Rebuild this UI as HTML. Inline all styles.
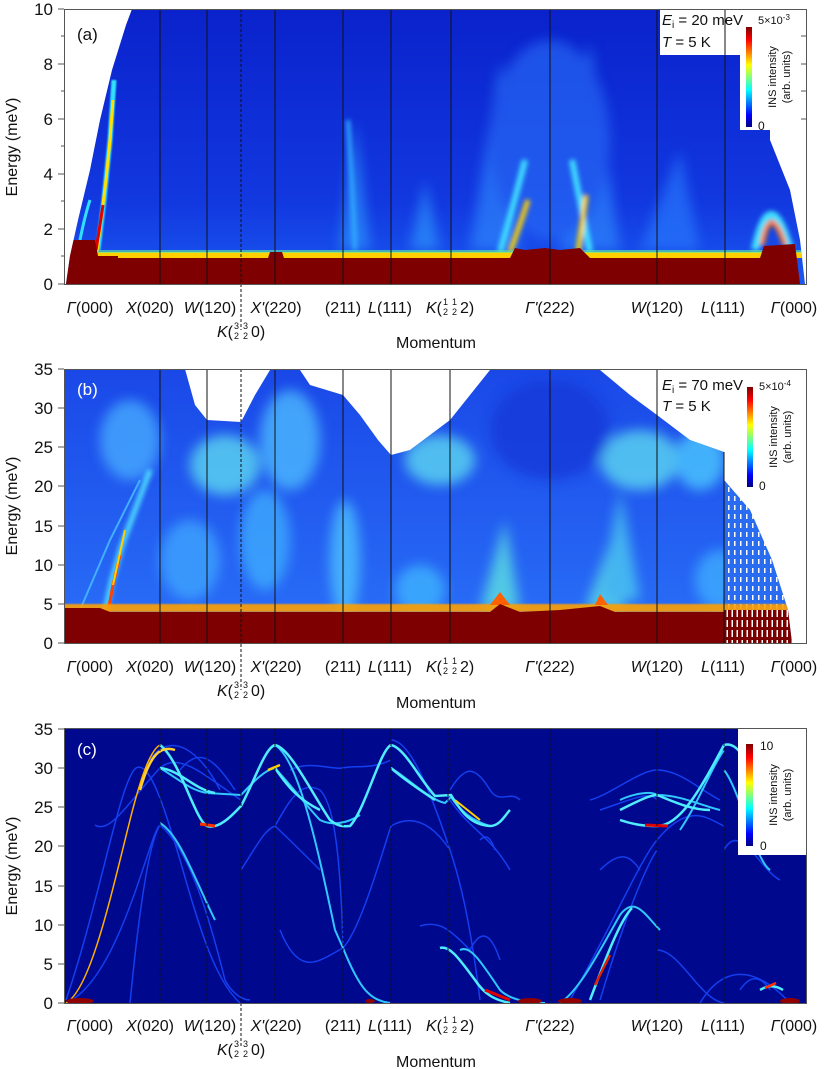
<!DOCTYPE html>
<html><head><meta charset="utf-8"><style>
html,body{margin:0;padding:0;background:#fff;}
svg{display:block;font-family:"Liberation Sans",sans-serif;}
</style></head><body>
<svg width="830" height="1069" viewBox="0 0 830 1069">
<defs>
<linearGradient id="jet" x1="0" y1="1" x2="0" y2="0">
<stop offset="0" stop-color="#00007f"/><stop offset="0.12" stop-color="#0000ff"/><stop offset="0.37" stop-color="#00ffff"/><stop offset="0.62" stop-color="#ffff00"/><stop offset="0.87" stop-color="#ff0000"/><stop offset="1" stop-color="#7f0000"/>
</linearGradient>
<linearGradient id="ga" x1="0" y1="0" x2="0" y2="1">
<stop offset="0" stop-color="#0a22cc"/><stop offset="0.7" stop-color="#1238e0"/><stop offset="1" stop-color="#1a58f0"/>
</linearGradient>
<linearGradient id="gb" x1="0" y1="0" x2="0" y2="1">
<stop offset="0" stop-color="#1a48e8"/><stop offset="1" stop-color="#2a70f8"/>
</linearGradient>
<filter id="bl" x="-50%" y="-50%" width="200%" height="200%"><feGaussianBlur stdDeviation="6"/></filter>
<filter id="bl2" x="-50%" y="-50%" width="200%" height="200%"><feGaussianBlur stdDeviation="2.5"/></filter>
<filter id="bl1" x="-20%" y="-20%" width="140%" height="140%"><feGaussianBlur stdDeviation="0.8"/></filter>
<pattern id="wd" width="5" height="10" patternUnits="userSpaceOnUse"><rect x="0" y="0" width="5" height="10" fill="#7a0000"/><rect x="1.5" y="0" width="1.5" height="7" fill="#fff"/></pattern>
<pattern id="wd2" width="6" height="9" patternUnits="userSpaceOnUse"><rect width="6" height="9" fill="#2a6cf0"/><rect x="2" y="1" width="1.5" height="5" fill="#fff"/></pattern>
<clipPath id="ca"><path d="M66,284 L70,256 L78,220 L90,170 L100,120 L112,70 L126,25 L132,9 L660,9 L660,55 L740,55 L740,130 L770,130 L770,140 L790,190 L800,240 L805,284 Z"/></clipPath>
<clipPath id="cb"><path d="M64,643 L64,369 L185,369 L195,405 L207,420 L241,422 L255,395 L270,370 L300,370 L310,385 L343,395 L360,415 L378,440 L391,455 L410,450 L430,435 L450,420 L470,395 L490,370 L600,370 L630,395 L657,415 L690,440 L724,452 L724,480 L750,510 L772,560 L788,610 L792,643 Z"/></clipPath>
<clipPath id="cc"><rect x="64" y="728" width="743" height="275"/></clipPath>
</defs>

<!-- ================= PANEL A ================= -->
<g clip-path="url(#ca)">
<rect x="64" y="9" width="743" height="275" fill="url(#ga)"/>
<g filter="url(#bl)" opacity="0.6">
<path d="M340,250 L355,120 L370,250 Z" fill="#30a0ff"/>
<path d="M410,250 L425,180 L440,250 Z" fill="#30a0ff"/>
<path d="M470,250 L500,60 L520,250 Z" fill="#3090ff"/>
<path d="M560,250 L590,40 L620,250 Z" fill="#3090ff"/>
<path d="M640,250 L680,150 L700,250 Z" fill="#2a80ff"/>
<ellipse cx="550" cy="140" rx="60" ry="100" fill="#2a70f8"/>
</g>
<g filter="url(#bl2)">
<path d="M500,252 Q515,200 525,160" stroke="#40e0ff" stroke-width="6" fill="none"/>
<path d="M510,252 Q520,225 528,200" stroke="#ffd000" stroke-width="5" fill="none"/>
<path d="M590,252 Q580,200 572,160" stroke="#40e0ff" stroke-width="6" fill="none"/>
<path d="M578,252 Q582,225 586,195" stroke="#ffd000" stroke-width="5" fill="none"/>
<path d="M755,250 Q770,180 790,250" stroke="#40e0ff" stroke-width="8" fill="none"/>
<path d="M762,245 Q770,200 785,245" stroke="#ff8000" stroke-width="5" fill="none"/>
<path d="M355,250 Q352,180 348,120" stroke="#30b0ff" stroke-width="4" fill="none"/>
</g>
<path d="M98,250 L104,200 L110,140 L114,80" stroke="#30e0ff" stroke-width="5" fill="none" filter="url(#bl1)"/>
<path d="M97,252 L101,220 L106,180 L110,140 L113,100" stroke="#ffe000" stroke-width="3" fill="none"/>
<path d="M96,250 L100,225 L103,205" stroke="#e00000" stroke-width="3" fill="none"/>
<path d="M80,240 Q85,215 90,200" stroke="#30e0ff" stroke-width="3" fill="none"/>
<rect x="64" y="252" width="743" height="6" fill="#ffd000"/>
<rect x="64" y="250" width="743" height="3" fill="#60f0a0" opacity="0.6"/>
<path d="M64,284 L64,240 L95,240 L98,256 L118,256 L118,258 L268,258 L270,252 L282,252 L284,258 L510,258 L515,248 L525,250 L545,248 L560,250 L580,248 L590,258 L760,258 L764,246 L795,244 L800,284 Z" fill="#7f0000"/>
</g>
<g stroke="#111" stroke-width="1">
<line x1="160" y1="9" x2="160" y2="284"/><line x1="207" y1="9" x2="207" y2="284"/>
<line x1="275" y1="9" x2="275" y2="284"/><line x1="343" y1="9" x2="343" y2="284"/>
<line x1="391" y1="9" x2="391" y2="284"/><line x1="451" y1="9" x2="451" y2="284"/>
<line x1="550" y1="9" x2="550" y2="284"/><line x1="657" y1="9" x2="657" y2="284"/>
<line x1="725" y1="9" x2="725" y2="284"/>
</g>
<line x1="241" y1="9" x2="241" y2="330" stroke="#111" stroke-width="1" stroke-dasharray="3,2"/>
<rect x="64.5" y="9.5" width="742" height="275" fill="none" stroke="#555" stroke-width="1"/>
<g stroke="#555"><line x1="58" y1="284" x2="64" y2="284"/><line x1="58" y1="229" x2="64" y2="229"/><line x1="58" y1="174" x2="64" y2="174"/><line x1="58" y1="119" x2="64" y2="119"/><line x1="58" y1="64" x2="64" y2="64"/><line x1="58" y1="9" x2="64" y2="9"/>
<line x1="61" y1="256" x2="64" y2="256"/><line x1="61" y1="201" x2="64" y2="201"/><line x1="61" y1="146" x2="64" y2="146"/><line x1="61" y1="91" x2="64" y2="91"/><line x1="61" y1="36" x2="64" y2="36"/>
<line x1="801" y1="36" x2="807" y2="36"/><line x1="801" y1="64" x2="807" y2="64"/><line x1="801" y1="91" x2="807" y2="91"/><line x1="801" y1="119" x2="807" y2="119"/></g>
<g font-size="17" text-anchor="end" fill="#111">
<text x="53" y="290">0</text><text x="53" y="235">2</text><text x="53" y="180">4</text><text x="53" y="125">6</text><text x="53" y="70">8</text><text x="53" y="15">10</text>
</g>
<text transform="translate(17,147) rotate(-90)" font-size="16" text-anchor="middle" fill="#111">Energy (meV)</text>
<text x="77" y="40" font-size="17" fill="#111">(a)</text>
<text x="662" y="25" font-size="15" fill="#111"><tspan font-style="italic">E</tspan><tspan font-size="10" dy="3">i</tspan><tspan dy="-3"> = 20 meV</tspan></text>
<text x="662" y="47" font-size="15" fill="#111"><tspan font-style="italic">T</tspan> = 5 K</text>
<rect x="746" y="27" width="6" height="100" fill="url(#jet)"/>
<text x="758" y="24" font-size="11" fill="#111">5×10<tspan font-size="8" dy="-4">-3</tspan></text>
<text x="758" y="130" font-size="12" fill="#111">0</text>
<text transform="translate(776,77) rotate(-90)" font-size="11" text-anchor="middle" fill="#111">INS intensity</text>
<text transform="translate(790,77) rotate(-90)" font-size="11" text-anchor="middle" fill="#111">(arb. units)</text>

<!-- x labels A -->
<g font-size="16" fill="#111" text-anchor="middle">
<text x="90" y="313"><tspan font-style="italic">Γ</tspan>(000)</text>
<text x="150" y="313"><tspan font-style="italic">X</tspan>(020)</text>
<text x="210" y="313"><tspan font-style="italic">W</tspan>(120)</text>
<text x="276" y="313"><tspan font-style="italic">X'</tspan>(220)</text>
<text x="343" y="313">(211)</text>
<text x="390" y="313"><tspan font-style="italic">L</tspan>(111)</text>
<text x="550" y="313"><tspan font-style="italic">Γ'</tspan>(222)</text>
<text x="657" y="313"><tspan font-style="italic">W</tspan>(120)</text>
<text x="723" y="313"><tspan font-style="italic">L</tspan>(111)</text>
<text x="794" y="313"><tspan font-style="italic">Γ</tspan>(000)</text>
<text x="436" y="348">Momentum</text>
</g>
<g font-size="16" fill="#111">
<text x="426" y="313"><tspan font-style="italic">K</tspan>(</text><text x="443" y="305" font-size="9">1</text><text x="443" y="315" font-size="9">2</text><text x="452" y="305" font-size="9">1</text><text x="452" y="315" font-size="9">2</text><text x="460" y="313">2)</text>
<text x="217" y="337"><tspan font-style="italic">K</tspan>(</text><text x="234" y="329" font-size="9">3</text><text x="234" y="339" font-size="9">2</text><text x="243" y="329" font-size="9">3</text><text x="243" y="339" font-size="9">2</text><text x="251" y="337">0)</text>
</g>

<!-- ================= PANEL B ================= -->
<g clip-path="url(#cb)">
<rect x="64" y="369" width="743" height="275" fill="url(#gb)"/>
<g filter="url(#bl)" opacity="0.75">
<ellipse cx="130" cy="440" rx="30" ry="40" fill="#4ab0ff"/>
<ellipse cx="225" cy="465" rx="35" ry="30" fill="#60e0f0"/>
<ellipse cx="290" cy="440" rx="30" ry="50" fill="#50c0ff"/>
<ellipse cx="190" cy="560" rx="30" ry="40" fill="#40a8ff"/>
<ellipse cx="265" cy="540" rx="25" ry="50" fill="#40b0ff"/>
<ellipse cx="345" cy="560" rx="15" ry="60" fill="#50c8ff"/>
<ellipse cx="440" cy="460" rx="35" ry="25" fill="#60e0f0"/>
<ellipse cx="640" cy="460" rx="40" ry="30" fill="#60e0f0"/>
<ellipse cx="700" cy="460" rx="25" ry="30" fill="#50d0ff"/>
<ellipse cx="420" cy="590" rx="25" ry="25" fill="#40b8ff"/>
<ellipse cx="720" cy="580" rx="25" ry="30" fill="#40b0ff"/>
<ellipse cx="550" cy="430" rx="60" ry="50" fill="#1238d8"/>
<path d="M480,610 L505,520 L520,610 Z" fill="#60e8e0"/>
<path d="M585,610 L615,530 L625,610 Z" fill="#60e8e0"/>
<path d="M600,600 L620,490 L640,600 Z" fill="#50d0f0"/>
</g>
<path d="M105,612 L112,580 L122,545 L135,510 L150,470" stroke="#50e0ff" stroke-width="5" fill="none" filter="url(#bl2)"/>
<path d="M108,612 L113,585 L120,555" stroke="#ff4000" stroke-width="3" fill="none"/>
<path d="M113,585 L125,530" stroke="#ffd000" stroke-width="2" fill="none"/>
<path d="M80,610 L110,540 L140,480" stroke="#40b0ff" stroke-width="2" fill="none"/>
<rect x="724" y="480" width="70" height="130" fill="url(#wd2)"/>
<rect x="64" y="604" width="743" height="8" fill="#ffa000" opacity="0.9" filter="url(#bl1)"/>
<path d="M490,605 L500,592 L510,605 Z M595,605 L600,594 L608,605 Z" fill="#ff6000"/>
<path d="M64,643 L64,608 L100,608 L110,612 L490,612 L500,604 L510,608 L520,612 L560,610 L600,606 L615,612 L724,612 L724,643 Z" fill="#7f0000"/>
<rect x="724" y="610" width="70" height="33" fill="url(#wd)"/>
</g>
<g stroke="#111" stroke-width="1">
<line x1="160" y1="369" x2="160" y2="643"/><line x1="207" y1="369" x2="207" y2="643"/>
<line x1="275" y1="369" x2="275" y2="643"/><line x1="343" y1="369" x2="343" y2="643"/>
<line x1="391" y1="369" x2="391" y2="643"/><line x1="450" y1="369" x2="450" y2="643"/>
<line x1="550" y1="369" x2="550" y2="643"/><line x1="657" y1="369" x2="657" y2="643"/>
<line x1="724" y1="452" x2="724" y2="643"/>
</g>
<line x1="241" y1="369" x2="241" y2="690" stroke="#111" stroke-width="1" stroke-dasharray="3,2"/>
<rect x="64.5" y="369.5" width="742" height="274" fill="none" stroke="#555"/>
<g stroke="#555">
<line x1="58" y1="643" x2="64" y2="643"/><line x1="58" y1="604" x2="64" y2="604"/><line x1="58" y1="565" x2="64" y2="565"/><line x1="58" y1="526" x2="64" y2="526"/><line x1="58" y1="486" x2="64" y2="486"/><line x1="58" y1="447" x2="64" y2="447"/><line x1="58" y1="408" x2="64" y2="408"/><line x1="58" y1="369" x2="64" y2="369"/>
</g>
<g font-size="17" text-anchor="end" fill="#111">
<text x="53" y="649">0</text><text x="53" y="610">5</text><text x="53" y="571">10</text><text x="53" y="532">15</text><text x="53" y="492">20</text><text x="53" y="453">25</text><text x="53" y="414">30</text><text x="53" y="375">35</text>
</g>
<text transform="translate(17,506) rotate(-90)" font-size="16" text-anchor="middle" fill="#111">Energy (meV)</text>
<text x="77" y="395" font-size="17" fill="#fff">(b)</text>
<text x="662" y="390" font-size="15" fill="#111"><tspan font-style="italic">E</tspan><tspan font-size="10" dy="3">i</tspan><tspan dy="-3"> = 70 meV</tspan></text>
<text x="662" y="411" font-size="15" fill="#111"><tspan font-style="italic">T</tspan> = 5 K</text>
<rect x="747" y="387" width="6" height="100" fill="url(#jet)"/>
<text x="759" y="390" font-size="11" fill="#111">5×10<tspan font-size="8" dy="-4">-4</tspan></text>
<text x="759" y="490" font-size="12" fill="#111">0</text>
<text transform="translate(777,437) rotate(-90)" font-size="11" text-anchor="middle" fill="#111">INS intensity</text>
<text transform="translate(791,437) rotate(-90)" font-size="11" text-anchor="middle" fill="#111">(arb. units)</text>
<g font-size="16" fill="#111" text-anchor="middle">
<text x="90" y="672"><tspan font-style="italic">Γ</tspan>(000)</text>
<text x="150" y="672"><tspan font-style="italic">X</tspan>(020)</text>
<text x="210" y="672"><tspan font-style="italic">W</tspan>(120)</text>
<text x="276" y="672"><tspan font-style="italic">X'</tspan>(220)</text>
<text x="343" y="672">(211)</text>
<text x="390" y="672"><tspan font-style="italic">L</tspan>(111)</text>
<text x="550" y="672"><tspan font-style="italic">Γ'</tspan>(222)</text>
<text x="657" y="672"><tspan font-style="italic">W</tspan>(120)</text>
<text x="723" y="672"><tspan font-style="italic">L</tspan>(111)</text>
<text x="794" y="672"><tspan font-style="italic">Γ</tspan>(000)</text>
<text x="436" y="708">Momentum</text>
</g>
<g font-size="16" fill="#111">
<text x="426" y="672"><tspan font-style="italic">K</tspan>(</text><text x="443" y="664" font-size="9">1</text><text x="443" y="674" font-size="9">2</text><text x="452" y="664" font-size="9">1</text><text x="452" y="674" font-size="9">2</text><text x="460" y="672">2)</text>
<text x="217" y="696"><tspan font-style="italic">K</tspan>(</text><text x="234" y="688" font-size="9">3</text><text x="234" y="698" font-size="9">2</text><text x="243" y="688" font-size="9">3</text><text x="243" y="698" font-size="9">2</text><text x="251" y="696">0)</text>
</g>

<!-- ================= PANEL C ================= -->
<rect x="64" y="728" width="743" height="275" fill="#00088e"/>
<g clip-path="url(#cc)" fill="none">
<g stroke="#1848ff" stroke-width="1.5" opacity="0.85">
<path d="M66,1000 C100,900 120,780 136,768 C150,760 165,810 180,860 C200,930 215,980 240,1003"/>
<path d="M95,825 C110,835 130,800 160,768 C180,750 210,780 241,800"/>
<path d="M150,760 C170,730 200,750 220,790"/>
<path d="M180,770 C200,745 215,760 235,790"/>
<path d="M66,1003 C120,980 150,830 160,825"/>
<path d="M130,1003 C140,900 150,840 160,825"/>
<path d="M160,825 C190,850 210,920 225,980 C230,990 240,1000 250,1000"/>
<path d="M241,870 C260,840 265,830 275,826 C290,840 300,850 320,870"/>
<path d="M275,826 C290,800 300,780 320,790 C330,800 340,830 343,948"/>
<path d="M280,930 C300,980 320,960 343,948 C360,930 380,860 391,826"/>
<path d="M343,768 C355,765 370,770 391,760"/>
<path d="M290,770 C310,760 330,770 343,768"/>
<path d="M391,826 C410,815 430,820 450,850"/>
<path d="M391,740 C410,740 430,790 450,850 C460,880 470,920 480,1000"/>
<path d="M420,926 C440,920 450,930 470,950 C480,930 490,930 500,960"/>
<path d="M450,790 C465,765 475,765 490,790 C500,805 510,790 520,800"/>
<path d="M450,800 C470,830 490,835 510,870"/>
<path d="M480,840 C485,835 490,835 495,850"/>
<path d="M570,1000 C610,930 640,860 657,840 C690,800 710,820 724,826"/>
<path d="M600,1000 C630,900 650,860 657,850"/>
<path d="M600,870 C620,850 630,855 640,870"/>
<path d="M590,800 C610,795 640,770 657,770 C680,770 700,790 720,800"/>
<path d="M600,810 C630,800 650,790 657,800"/>
<path d="M657,950 C680,950 700,1000 724,1003"/>
<path d="M700,1003 C720,970 750,960 790,1003"/>
<path d="M740,990 C750,975 760,975 770,990"/>
<path d="M724,850 C740,820 760,870 780,880"/>
</g>
<g stroke="#30c8ff" stroke-width="2">
<path d="M160,823 C180,835 195,880 215,920"/>
<path d="M160,768 C180,780 190,790 207,793 L241,795 C255,780 265,770 275,768 C295,790 310,810 320,820 C330,825 345,825 360,815"/>
<path d="M275,745 C300,760 320,860 335,930 L343,948"/>
<path d="M343,948 C360,990 370,1000 390,1003"/>
<path d="M391,768 C410,780 430,800 445,803 L451,797"/>
<path d="M451,797 C460,810 470,820 490,826"/>
<path d="M460,950 C470,945 480,960 500,990 C510,1000 530,1003 545,1003"/>
<path d="M560,1003 C580,990 600,950 620,915 C635,895 645,915 660,930"/>
<path d="M620,800 C630,795 650,790 657,795 C680,795 700,805 720,810"/>
<path d="M724,770 C740,790 755,860 770,870"/>
<path d="M680,830 C700,800 710,770 724,750"/>
</g>
<g stroke="#50ecff" stroke-width="2.5">
<path d="M160,745 C180,760 195,820 207,826 C220,830 235,812 241,806 C255,780 265,748 275,745 C290,748 310,790 330,820 C340,828 345,826 350,826 C365,810 380,750 391,745 C405,748 420,780 435,796 L451,795 C460,810 470,825 490,826 C500,826 505,815 510,810"/>
<path d="M160,768 C180,770 195,790 215,793"/>
<path d="M275,768 C290,790 300,800 320,810"/>
<path d="M391,768 C405,780 420,790 435,800"/>
<path d="M620,820 C635,825 645,826 657,826 C680,826 700,790 724,745 C740,740 750,770 760,790"/>
<path d="M620,810 C640,800 650,795 657,795 C670,800 690,810 710,810"/>
<path d="M440,948 C450,945 460,960 475,980 C485,995 495,1000 510,1003"/>
<path d="M590,1000 C605,960 620,920 632,908"/>
<path d="M760,990 C768,985 775,985 783,990"/>
</g>
<path d="M66,1003 C90,990 110,900 130,820 C140,780 150,750 160,745" stroke="#ffb000" stroke-width="1.5"/>
<path d="M140,790 C150,755 160,745 175,750" stroke="#ffd030" stroke-width="2.5"/>
<path d="M200,824 L215,826" stroke="#ff3000" stroke-width="3"/>
<path d="M268,770 L280,765" stroke="#ffd000" stroke-width="2.5"/>
<path d="M455,800 L480,820" stroke="#ffd000" stroke-width="2"/>
<path d="M645,825 L668,826" stroke="#e00000" stroke-width="3"/>
<path d="M595,985 L610,955" stroke="#e02000" stroke-width="2.5"/>
<path d="M485,990 L510,1000" stroke="#e00000" stroke-width="3"/>
<path d="M765,988 L776,983" stroke="#ff3000" stroke-width="2.5"/>
<g fill="#900000" stroke="none">
<ellipse cx="80" cy="1001" rx="14" ry="3"/><ellipse cx="530" cy="1001" rx="12" ry="3"/><ellipse cx="570" cy="1001" rx="12" ry="3"/><ellipse cx="790" cy="1001" rx="10" ry="3"/><ellipse cx="370" cy="1001" rx="5" ry="2"/>
</g>
</g>
<g stroke="#111" stroke-width="1" stroke-dasharray="3,2">
<line x1="160" y1="728" x2="160" y2="1003"/><line x1="207" y1="728" x2="207" y2="1003"/>
<line x1="275" y1="728" x2="275" y2="1003"/><line x1="343" y1="728" x2="343" y2="1003"/>
<line x1="391" y1="728" x2="391" y2="1003"/><line x1="448" y1="728" x2="448" y2="1003"/>
<line x1="550" y1="728" x2="550" y2="1003"/><line x1="657" y1="728" x2="657" y2="1003"/>
<line x1="724" y1="728" x2="724" y2="1003"/>
<line x1="241" y1="728" x2="241" y2="1048"/>
</g>
<rect x="738" y="728" width="69" height="127" fill="#fff"/>
<rect x="746" y="744" width="7" height="102" fill="url(#jet)"/>
<text x="760" y="750" font-size="12" fill="#111">10</text>
<text x="760" y="850" font-size="12" fill="#111">0</text>
<text transform="translate(777,795) rotate(-90)" font-size="11" text-anchor="middle" fill="#111">INS intensity</text>
<text transform="translate(791,795) rotate(-90)" font-size="11" text-anchor="middle" fill="#111">(arb. units)</text>
<rect x="64.5" y="728.5" width="742" height="275" fill="none" stroke="#555"/>
<g stroke="#555">
<line x1="58" y1="1003" x2="64" y2="1003"/><line x1="58" y1="964" x2="64" y2="964"/><line x1="58" y1="925" x2="64" y2="925"/><line x1="58" y1="886" x2="64" y2="886"/><line x1="58" y1="846" x2="64" y2="846"/><line x1="58" y1="807" x2="64" y2="807"/><line x1="58" y1="768" x2="64" y2="768"/><line x1="58" y1="729" x2="64" y2="729"/>
</g>
<g font-size="17" text-anchor="end" fill="#111">
<text x="53" y="1009">0</text><text x="53" y="970">5</text><text x="53" y="931">10</text><text x="53" y="892">15</text><text x="53" y="852">20</text><text x="53" y="813">25</text><text x="53" y="774">30</text><text x="53" y="735">35</text>
</g>
<text transform="translate(17,866) rotate(-90)" font-size="16" text-anchor="middle" fill="#111">Energy (meV)</text>
<text x="77" y="755" font-size="17" fill="#fff">(c)</text>
<g font-size="16" fill="#111" text-anchor="middle">
<text x="90" y="1031"><tspan font-style="italic">Γ</tspan>(000)</text>
<text x="150" y="1031"><tspan font-style="italic">X</tspan>(020)</text>
<text x="210" y="1031"><tspan font-style="italic">W</tspan>(120)</text>
<text x="276" y="1031"><tspan font-style="italic">X'</tspan>(220)</text>
<text x="343" y="1031">(211)</text>
<text x="390" y="1031"><tspan font-style="italic">L</tspan>(111)</text>
<text x="550" y="1031"><tspan font-style="italic">Γ'</tspan>(222)</text>
<text x="657" y="1031"><tspan font-style="italic">W</tspan>(120)</text>
<text x="723" y="1031"><tspan font-style="italic">L</tspan>(111)</text>
<text x="794" y="1031"><tspan font-style="italic">Γ</tspan>(000)</text>
<text x="436" y="1067">Momentum</text>
</g>
<g font-size="16" fill="#111">
<text x="426" y="1031"><tspan font-style="italic">K</tspan>(</text><text x="443" y="1023" font-size="9">1</text><text x="443" y="1033" font-size="9">2</text><text x="452" y="1023" font-size="9">1</text><text x="452" y="1033" font-size="9">2</text><text x="460" y="1031">2)</text>
<text x="217" y="1055"><tspan font-style="italic">K</tspan>(</text><text x="234" y="1047" font-size="9">3</text><text x="234" y="1057" font-size="9">2</text><text x="243" y="1047" font-size="9">3</text><text x="243" y="1057" font-size="9">2</text><text x="251" y="1055">0)</text>
</g>
</svg>
</body></html>
